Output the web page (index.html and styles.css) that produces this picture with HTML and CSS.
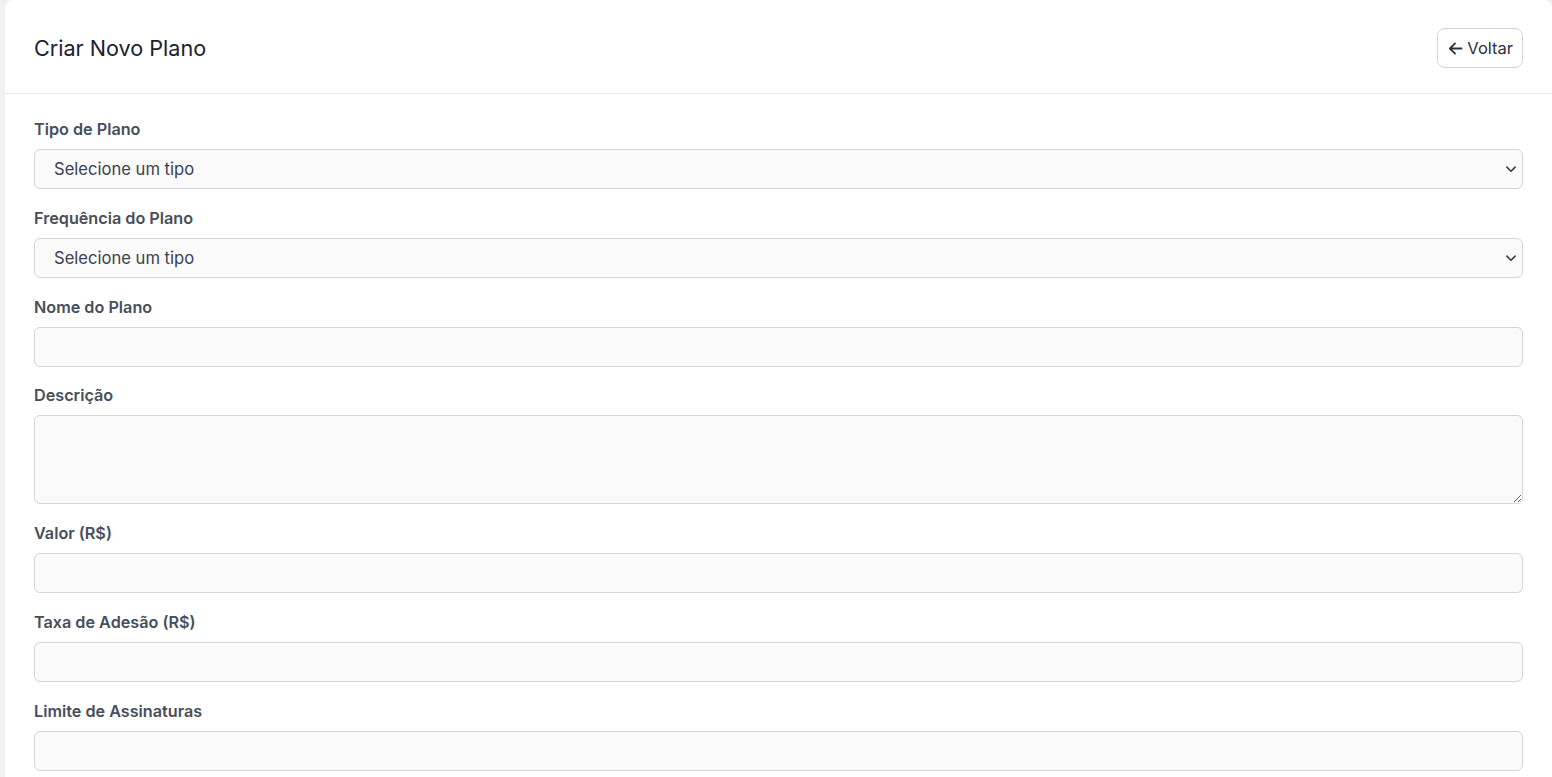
FILE: index.html
```html
<!DOCTYPE html>
<html lang="pt-BR">
<head>
<meta charset="utf-8">
<title>Criar Novo Plano</title>
<link rel="stylesheet" href="styles.css">
</head>
<body>
<div class="card">
  <div class="card-header">
    <h1 class="title">Criar Novo Plano</h1>
    <button class="btn-back" type="button">
      <svg class="arrow" width="15" height="15" viewBox="0 0 16 16" aria-hidden="true"><path d="M14.5 8H2M7.5 2.5 2 8l5.5 5.5" fill="none" stroke="currentColor" stroke-width="1.9" stroke-linecap="round" stroke-linejoin="round"/></svg>
      Voltar
    </button>
  </div>
  <form class="card-body">
    <div class="field">
      <label class="label">Tipo de Plano</label>
      <div class="select-wrap">
        <select class="control select"><option>Selecione um tipo</option></select>
        <svg class="chev" width="12" height="12" viewBox="0 0 16 16" aria-hidden="true"><path d="M2.5 5.5 8 11l5.5-5.5" fill="none" stroke="currentColor" stroke-width="2.2" stroke-linecap="round" stroke-linejoin="round"/></svg>
      </div>
    </div>
    <div class="field">
      <label class="label">Frequência do Plano</label>
      <div class="select-wrap">
        <select class="control select"><option>Selecione um tipo</option></select>
        <svg class="chev" width="12" height="12" viewBox="0 0 16 16" aria-hidden="true"><path d="M2.5 5.5 8 11l5.5-5.5" fill="none" stroke="currentColor" stroke-width="2.2" stroke-linecap="round" stroke-linejoin="round"/></svg>
      </div>
    </div>
    <div class="field">
      <label class="label">Nome do Plano</label>
      <input class="control" type="text">
    </div>
    <div class="field">
      <label class="label">Descrição</label>
      <textarea class="control textarea"></textarea>
    </div>
    <div class="field">
      <label class="label">Valor (R$)</label>
      <input class="control" type="text">
    </div>
    <div class="field">
      <label class="label">Taxa de Adesão (R$)</label>
      <input class="control" type="text">
    </div>
    <div class="field">
      <label class="label">Limite de Assinaturas</label>
      <input class="control" type="text">
    </div>
  </form>
</div>
</body>
</html>
```
FILE: styles.css
```css
* { box-sizing: border-box; }
html, body { margin: 0; padding: 0; }
body {
  background: #f1f1f3;
  font-family: Inter, "Noto Sans", "Liberation Sans", sans-serif;
  padding-left: 5px;
  overflow: hidden;
  height: 777px;
}
.card {
  background: #ffffff;
  border-radius: 8px 8px 0 0;
  min-height: 800px;
}
.card-header {
  display: flex;
  align-items: center;
  justify-content: space-between;
  height: 94px;
  padding: 3px 29px 0 29px;
  border-bottom: 1px solid #e6e7ea;
}
.title {
  margin: 0;
  font-size: 21.6px;
  font-weight: 400;
  color: #1b2130;
}
.btn-back {
  display: inline-flex;
  align-items: center;
  gap: 4px;
  height: 40px;
  padding: 0 9px 0 10px;
  background: #ffffff;
  border: 1px solid #d3d5dc;
  border-radius: 8px;
  font-family: inherit;
  font-size: 16.5px;
  color: #2a3142;
}
.arrow { color: #2a3142; }
.card-body {
  padding: 25px 29px 0 29px;
  display: flex;
  flex-direction: column;
  gap: 18.8px;
}
.field {
  display: flex;
  flex-direction: column;
  gap: 10px;
}
.label {
  font-size: 16.2px;
  line-height: 20px;
  font-weight: 600;
  color: #474e5c;
}
.control {
  display: block;
  width: 100%;
  height: 40px;
  background: #fafafa;
  border: 1px solid #d5d6de;
  border-radius: 6px;
  font-family: inherit;
  font-size: 16.6px;
  color: #3b4252;
  padding: 0 19px;
  outline: none;
}
.select-wrap { position: relative; }
.select {
  appearance: none;
  -webkit-appearance: none;
}
.chev {
  position: absolute;
  right: 6px;
  top: 14px;
  color: #3a3f4a;
  pointer-events: none;
}
.textarea {
  height: 89px;
  padding: 10px 19px;
  resize: vertical;
}
```
